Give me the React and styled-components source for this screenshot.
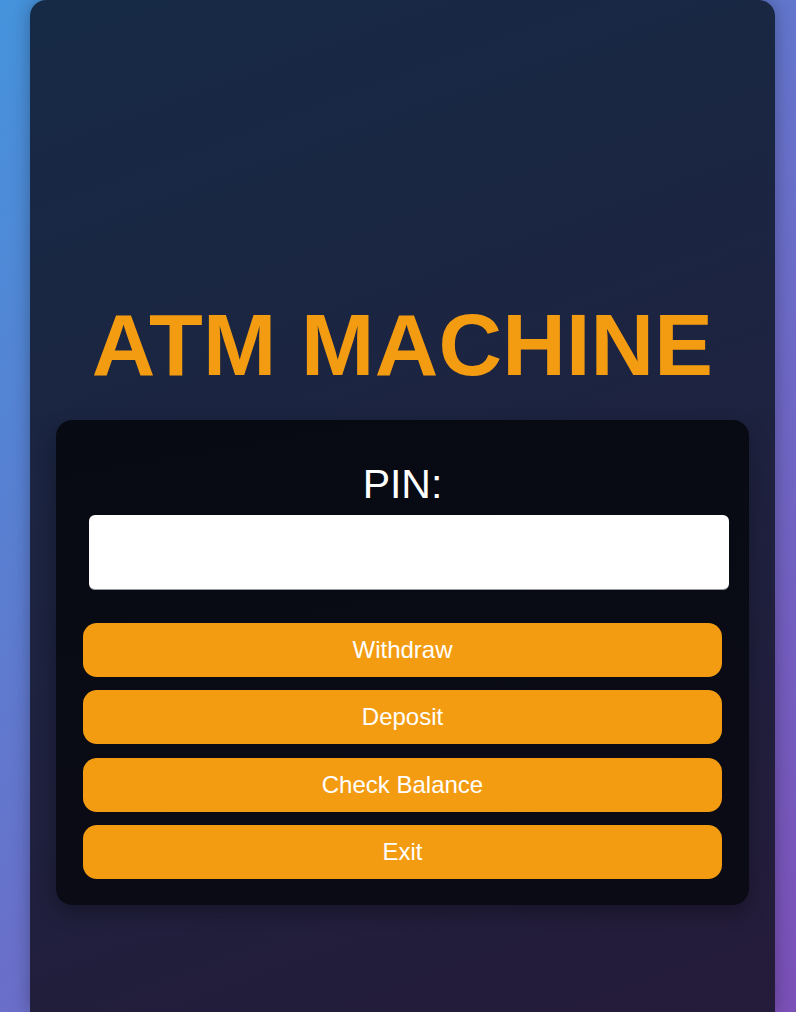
import React, { useState } from 'react';
import styled, { createGlobalStyle } from 'styled-components';

const GlobalStyle = createGlobalStyle`
	html, body {
		margin: 0;
		padding: 0;
		height: 100%;
		overflow: hidden;
	}
	body {
		font-family: 'Liberation Sans', Arial, sans-serif;
		background: linear-gradient(135deg, #4593dc 0%, #6a6fc9 55%, #7c50b8 100%);
	}
`;

const Machine = styled.div`
	margin-left: 30px;
	width: 745px;
	height: 1012px;
	box-sizing: border-box;
	padding: 294px 26px 0;
	border-radius: 16px 16px 0 0;
	background: linear-gradient(160deg, #162a45 0%, #1d2340 50%, #251b3a 100%);
	box-shadow: 0 0 18px rgba(0, 0, 0, 0.3);
	display: flex;
	flex-direction: column;
	align-items: stretch;
`;

const Title = styled.h1`
	margin: 0 0 25px;
	font-size: 88px;
	font-weight: 700;
	line-height: 101px;
	text-align: center;
	letter-spacing: 0.2px;
	color: #f39c12;
	white-space: nowrap;
`;

const Panel = styled.div`
	box-sizing: border-box;
	padding: 41px 27px 26px;
	border-radius: 16px;
	background: linear-gradient(170deg, #070a13 0%, #0b0b16 100%);
	box-shadow: 0 8px 20px rgba(0, 0, 0, 0.3);
	display: flex;
	flex-direction: column;
`;

const Label = styled.label`
	display: block;
	font-size: 41px;
	line-height: 46px;
	color: #ffffff;
	text-align: center;
	margin-bottom: 8px;
`;

const PinInput = styled.input`
	box-sizing: border-box;
	width: 640px;
	height: 75px;
	margin: 0 0 32.5px 6px;
	border: none;
	border-bottom: 1px solid #9a9aa0;
	border-radius: 6px;
	background: #ffffff;
	font-size: 24px;
	padding: 0 14px;
	outline: none;
`;

const Actions = styled.div`
	display: flex;
	flex-direction: column;
	gap: 13.6px;
`;

const ActionButton = styled.button`
	height: 54px;
	border: none;
	border-radius: 14px;
	background: #f39c12;
	color: #ffffff;
	font-family: 'Liberation Sans', Arial, sans-serif;
	font-size: 24px;
	cursor: pointer;

	&:hover {
		background: #e08e0b;
	}
`;

const actions = ['Withdraw', 'Deposit', 'Check Balance', 'Exit'];

export default function App() {
	const [pin, setPin] = useState('');

	return (
		<>
			<GlobalStyle />
			<Machine>
				<Title>ATM MACHINE</Title>
				<Panel>
					<Label htmlFor="pin">PIN:</Label>
					<PinInput id="pin" type="password" value={pin} onChange={(e) => setPin(e.target.value)} />
					<Actions>
						{actions.map((a) => (
							<ActionButton key={a}>{a}</ActionButton>
						))}
					</Actions>
				</Panel>
			</Machine>
		</>
	);
}
